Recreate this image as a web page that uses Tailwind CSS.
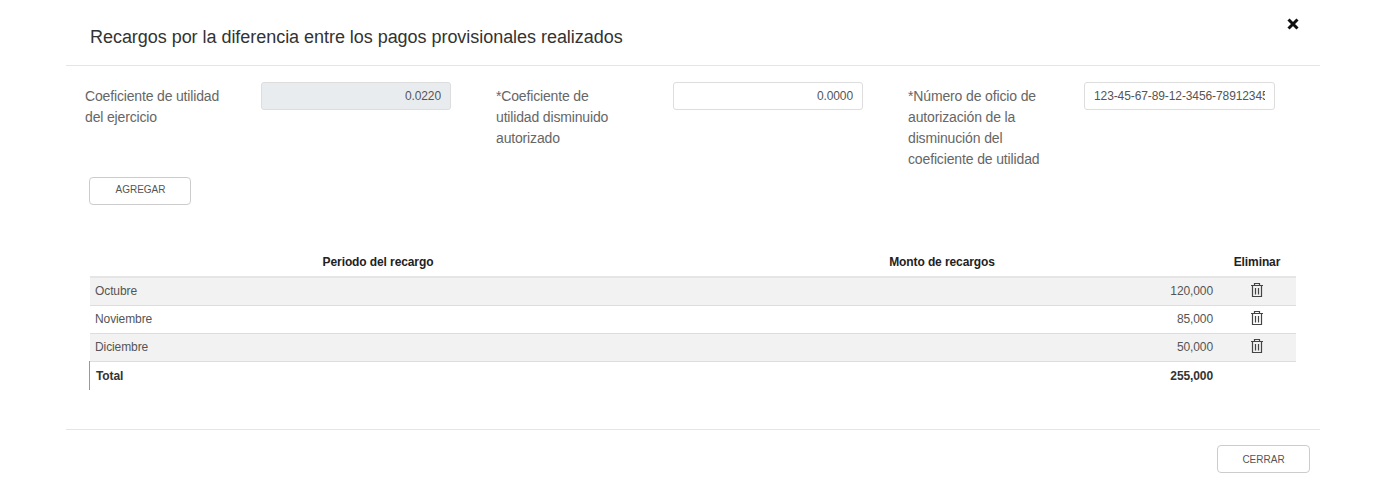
<!DOCTYPE html>
<html lang="en">
<head>
    <meta charset="UTF-8">
    <meta name="viewport" content="width=device-width, initial-scale=1.0">
    <title>Recargos</title>
    <script src="https://cdn.jsdelivr.net/npm/@tailwindcss/browser@4"></script>
</head>
<body class="bg-white font-['Liberation_Sans',Arial,sans-serif] text-[#555]">
    <div class="w-[1254px] ml-[66px] h-[491px] relative">
        <!-- Header -->
        <div class="h-[66px] border-b border-[#e5e5e5] pl-[24px] pt-[26px]">
            <h1 class="text-[18px] leading-[22px] tracking-[-0.04px] text-[#333] font-normal">Recargos por la diferencia entre los pagos provisionales realizados</h1>
        </div>
        <button class="absolute left-[1220px] top-[17px] w-[14px] h-[14px]">
            <svg class="w-[14px] h-[14px]" viewBox="0 0 14 14" fill="none" stroke="#111" stroke-width="3"><path d="M2.5 2.5l9 9M11.5 2.5l-9 9"/></svg>
        </button>

        <!-- Form -->
        <div class="flex pl-[19px] pt-[16px] h-[111px]">
            <label class="w-[176px] pt-[4px] text-[14px] leading-[21px] tracking-[-0.16px] text-[#666]">Coeficiente de utilidad<br>del ejercicio</label>
            <input readonly value="0.0220" class="w-[190px] h-[28px] px-[9px] text-right text-[12px] tracking-[-0.1px] text-[#555] bg-[#e9ecef] border border-[#ddd] rounded-[3px]">
            <label class="w-[177px] ml-[45px] pt-[4px] text-[14px] leading-[21px] tracking-[-0.16px] text-[#666]">*Coeficiente de<br>utilidad disminuido<br>autorizado</label>
            <input value="0.0000" class="w-[190px] h-[28px] px-[9px] text-right text-[12px] tracking-[-0.1px] text-[#555] bg-white border border-[#ddd] rounded-[3px]">
            <label class="w-[176px] ml-[45px] pt-[4px] text-[14px] leading-[21px] tracking-[-0.14px] text-[#666]">*Número de oficio de<br>autorización de la<br>disminución del<br>coeficiente de utilidad</label>
            <input value="123-45-67-89-12-3456-78912345678" class="w-[191px] h-[28px] px-[9px] text-[12px] tracking-[-0.1px] text-[#555] bg-white border border-[#ddd] rounded-[3px]">
        </div>

        <div class="pl-[23px]">
            <button class="block w-[102px] h-[28px] pb-[4px] pl-[1px] text-[10px] text-[#555] bg-white border border-[#ccc] rounded-[4px]">AGREGAR</button>
        </div>

        <!-- Table -->
        <table class="ml-[24px] mt-[43px] w-[1206px] table-fixed border-collapse text-[12px] tracking-[-0.1px]">
            <thead>
                <tr class="h-[29px] border-b-2 border-[#e5e5e5] text-[#222]">
                    <th class="w-[576px] font-bold">Periodo del recargo</th>
                    <th class="w-[552px] font-bold">Monto de recargos</th>
                    <th class="w-[78px] font-bold">Eliminar</th>
                </tr>
            </thead>
            <tbody>
                <tr class="h-[28px] bg-[#f2f2f2] border-b border-[#ddd]">
                    <td class="pl-[5px]">Octubre</td>
                    <td class="pr-[5px] text-right">120,000</td>
                    <td><svg class="mx-auto -translate-y-[1px] w-[14px] h-[16px]" viewBox="0 0 14 16" fill="none" stroke="#444" stroke-width="1.2"><path d="M1 3.5h12M4.5 3.5V1.5h5v2M2.5 3.5v11h9v-11M5.5 6v6.5M8.5 6v6.5"/></svg></td>
                </tr>
                <tr class="h-[28px] bg-white border-b border-[#ddd]">
                    <td class="pl-[5px]">Noviembre</td>
                    <td class="pr-[5px] text-right">85,000</td>
                    <td><svg class="mx-auto -translate-y-[1px] w-[14px] h-[16px]" viewBox="0 0 14 16" fill="none" stroke="#444" stroke-width="1.2"><path d="M1 3.5h12M4.5 3.5V1.5h5v2M2.5 3.5v11h9v-11M5.5 6v6.5M8.5 6v6.5"/></svg></td>
                </tr>
                <tr class="h-[28px] bg-[#f2f2f2] border-b border-[#ddd]">
                    <td class="pl-[5px]">Diciembre</td>
                    <td class="pr-[5px] text-right">50,000</td>
                    <td><svg class="mx-auto -translate-y-[1px] w-[14px] h-[16px]" viewBox="0 0 14 16" fill="none" stroke="#444" stroke-width="1.2"><path d="M1 3.5h12M4.5 3.5V1.5h5v2M2.5 3.5v11h9v-11M5.5 6v6.5M8.5 6v6.5"/></svg></td>
                </tr>
                <tr class="h-[29px] font-bold text-[#333]">
                    <td class="pl-[6px] shadow-[-1px_0_0_#999]">Total</td>
                    <td class="pr-[5px] text-right">255,000</td>
                    <td></td>
                </tr>
            </tbody>
        </table>

        <!-- Footer -->
        <div class="mt-[39px] border-t border-[#e5e5e5] pt-[15px] pr-[10px] flex justify-end">
            <button class="w-[93px] h-[28px] text-[10px] text-[#555] bg-white border border-[#ccc] rounded-[4px]">CERRAR</button>
        </div>
    </div>
</body>
</html>
